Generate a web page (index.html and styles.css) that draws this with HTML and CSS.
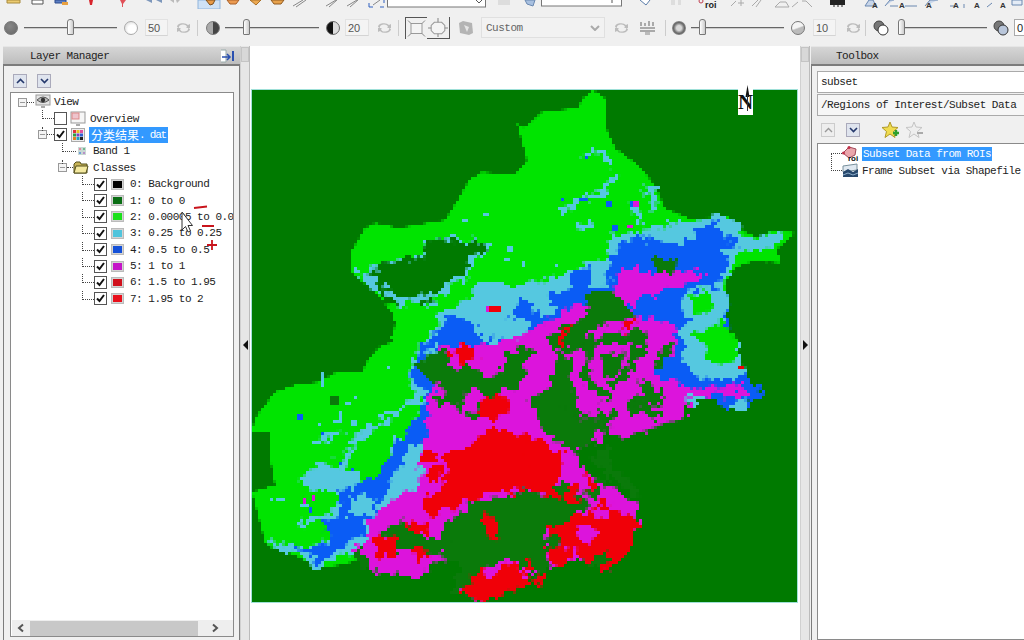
FILE: index.html
```html
<!DOCTYPE html>
<html lang="en">
  <head>
    <meta charset="UTF-8" />
    <title>ENVI Layer Manager</title>
    <link rel="stylesheet" href="styles.css">
  </head>
  <body>
    <!-- top toolbar is cut off by the window, only the bottom of the icons shows -->
    <svg class="icon-strip" width="1024" height="9" viewBox="0 0 1024 9">
      <rect x="198" y="0" width="22" height="9" fill="#cfe2f6" stroke="#8fb4dc"/>
      <path d="M7 0h13v3h-13z" fill="#eccb70" stroke="#a88a3c"/>
      <path d="M32 0h11v4h-11z" fill="#fff" stroke="#555"/>
      <path d="M55 0h11v3h-11z" fill="#5c7fc4" stroke="#2c4a8c"/><path d="M62 2h6v3h-6z" fill="#e8a040"/>
      <path d="M89 0h4l-1 5h-2z" fill="#d8242c"/><path d="M120 0h6l-3 4v3h-1v-3z" fill="#e05058"/>
      <path d="M146 0l6 3v-3zM156 0l6 3v-3z" fill="#7d97bb"/><path d="M170 0h4v3zM176 0h4l-3 3z" fill="#bbb"/>
      <path d="M206 0l4 5 3-1 2-4z" fill="#e89a48" stroke="#7a5020"/>
      <path d="M227 0h12l-3 4h-6z" fill="#ec9a50" stroke="#a8602a"/>
      <path d="M250 0h11l-5 5z" fill="#eca850" stroke="#a8702a"/>
      <path d="M271 0h13l-3 4h-7z" fill="#e8a24c" stroke="#905a20"/>
      <path d="M293 6l10-6M296 7l10-7" stroke="#888" fill="none"/>
      <path d="M326 6l10-6M329 7l8-7M347 6l10-6M350 7l8-7" stroke="#888" fill="none"/>
      <path d="M369 7h4M380 7h4M369 3v4M384 0v3" stroke="#3060c0" fill="none"/><path d="M373 5l7-5" stroke="#888"/>
      <rect x="387.500" y="-3" width="98" height="10" fill="#fff" stroke="#777"/>
      <path d="M476 0l3 3 3-3" stroke="#555" fill="none"/>
      <path d="M498 0h12v5h-12z" fill="#ddd"/>
      <path d="M525 0h10l-2 6-6-2z" fill="#a8c0e0" stroke="#6a88b0"/>
      <rect x="541.500" y="-3" width="80" height="9" fill="#fff" stroke="#777"/>
      <path d="M612 0v3" stroke="#555"/>
      <path d="M640 0l6 5 4-5" fill="#fff" stroke="#5a7ca8"/>
      <path d="M671 0v5h4v-5zM678 0v5h3v-5z" fill="#ddd"/>
      <circle cx="701" cy="1" r="2" fill="none" stroke="#c04050"/>
      <text class="strip-roi" x="705" y="8">roi</text>
      <path d="M731 6l5-5M738 3h6M741 0v6M752 6l6-6M756 7l5-7" stroke="#aaa" fill="none"/>
      <path d="M775 7h14l-3-5h-6zM798 2l-6 5M802 1h4l6 6" stroke="#aaa" fill="none"/>
      <path d="M830 0h15v5h-15z" fill="#222"/><path d="M834 5v2M838 5v2M842 5v2" stroke="#222"/>
      <path d="M865 6l4-6h4l3 6zM885 6l5-6h4M890 6h8M905 6h12M925 6l5-6h8M950 6h6" stroke="#6a88b0" fill="#c8d6ea"/>
      <text class="strip-a" x="872" y="8">A</text><text class="strip-a" x="899" y="8">A</text><text class="strip-a" x="926" y="8">A</text><text class="strip-a" x="953" y="8">A</text><text class="strip-a" x="974" y="8">A</text><text class="strip-a" x="1000" y="8">A</text>
      <path d="M964 4v4M987 7l5-4M1012 0h10v5h-10z" stroke="#6a88b0" fill="#e4ecf6"/>
    </svg>

    <div class="slider-bar">
      <i class="ball ball--dark"></i>
      <div class="slider slider--a"><i class="thumb"></i></div>
      <i class="ball ball--white"></i>
      <span class="num">50</span>
      <svg class="refresh" viewBox="0 0 15 12"><path d="M1 5a6 4 0 0 1 11-2l2-1v4h-4l1-1a4 3 0 0 0-8 1zM14 7a6 4 0 0 1-11 2l-2 1v-4h4l-1 1a4 3 0 0 0 8-1z"/></svg>
      <i class="sep"></i>
      <i class="ball ball--half"></i>
      <div class="slider slider--b"><i class="thumb"></i></div>
      <i class="ball ball--halfb"></i>
      <span class="num num--b">20</span>
      <svg class="refresh" viewBox="0 0 15 12"><path d="M1 5a6 4 0 0 1 11-2l2-1v4h-4l1-1a4 3 0 0 0-8 1zM14 7a6 4 0 0 1-11 2l-2 1v-4h4l-1 1a4 3 0 0 0 8-1z"/></svg>
      <i class="sep"></i>
      <div class="frame-btns">
        <svg class="frame-btn frame-btn--a" width="22" height="22" viewBox="0 0 21 20"><rect x="5" y="5" width="11" height="10" fill="#f4f4f4" stroke="#9a9a9a"/><path d="M2 2l3 3M19 2l-3 3M2 18l3-3M19 18l-3-3" stroke="#888"/></svg>
        <svg class="frame-btn frame-btn--b" width="23" height="22" viewBox="0 0 21 20"><path d="M7 5h7l3 3v5l-3 3h-7l-3-3v-5z" fill="#f4f4f4" stroke="#9a9a9a"/><path d="M10.500 1v4M10.500 16v3M1 10.500h3M17 10.500h3" stroke="#888"/></svg>
      </div>
      <svg class="gray-ic" width="16" height="16" viewBox="0 0 16 16"><path d="M1 3l4-2 9 2 1 10-4 2-9-2z" fill="#b4b4b4"/><path d="M6 5l5 2-2 5z" fill="#e6e6e6"/></svg>
      <div class="combo">Custom<svg width="10" height="6" viewBox="0 0 10 6"><path d="M1 1l4 4 4-4" fill="none" stroke="#aaa" stroke-width="2"/></svg></div>
      <svg class="refresh refresh--c" viewBox="0 0 15 12"><path d="M1 5a6 4 0 0 1 11-2l2-1v4h-4l1-1a4 3 0 0 0-8 1zM14 7a6 4 0 0 1-11 2l-2 1v-4h4l-1 1a4 3 0 0 0 8-1z"/></svg>
      <svg class="gray-ic gray-ic--b" width="17" height="16" viewBox="0 0 17 16"><path d="M1 8h15M1 11h15" stroke="#aaa" stroke-width="2"/><path d="M2 2v4M6 3v3M10 1v5M14 2v4" stroke="#aaa" stroke-width="2"/><path d="M6 12h5v3h-5z" fill="#bbb"/></svg>
      <i class="sep sep--c"></i>
      <i class="ball ball--ring"></i>
      <div class="slider slider--c"><i class="thumb"></i></div>
      <i class="ball ball--oval"></i>
      <span class="num num--c">10</span>
      <svg class="refresh refresh--d" viewBox="0 0 15 12"><path d="M1 5a6 4 0 0 1 11-2l2-1v4h-4l1-1a4 3 0 0 0-8 1zM14 7a6 4 0 0 1-11 2l-2 1v-4h4l-1 1a4 3 0 0 0 8-1z"/></svg>
      <i class="sep sep--d"></i>
      <svg class="overlap" width="16" height="16" viewBox="0 0 16 16"><circle cx="6" cy="6" r="5" fill="#777" stroke="#444"/><circle cx="10" cy="10" r="5" fill="#fff" stroke="#333"/></svg>
      <div class="slider slider--d"><i class="thumb thumb--start"></i></div>
      <svg class="overlap overlap--b" width="16" height="16" viewBox="0 0 16 16"><circle cx="6" cy="6" r="5" fill="#777" stroke="#444"/><circle cx="10" cy="10" r="5" fill="#b9c6da" stroke="#333"/></svg>
      <span class="num num--d">0</span>
    </div>

    <div class="workspace">
      <section class="panel panel--left">
        <header class="panel__title">
          <span>Layer Manager</span>
          <svg width="16" height="14" viewBox="0 0 16 14"><path d="M2 1h5v12h-5" fill="#fff" stroke="#9aa"/><path d="M3 8h7M8 5l3 3-3 3" fill="none" stroke="#2a50b0" stroke-width="1.500"/><path d="M14 2v10" stroke="#2a50b0" stroke-width="2"/></svg>
        </header>
        <div class="panel__body">
          <div class="move-btns">
            <button class="move-btn"><svg width="9" height="6" viewBox="0 0 9 6"><path d="M1 5l3.500-3.500 3.500 3.500" fill="none" stroke="#24386c" stroke-width="1.600"/></svg></button>
            <button class="move-btn"><svg width="9" height="6" viewBox="0 0 9 6"><path d="M1 1l3.500 3.500 3.500-3.500" fill="none" stroke="#24386c" stroke-width="1.600"/></svg></button>
          </div>
          <div class="tree-box">
            <ul class="tree">
              <li class="row row--view">
                <i class="exp"></i><i class="dash"></i>
                <svg class="ic ic--view" width="16" height="16" viewBox="0 0 16 16"><rect x="1" y="1" width="14" height="10" fill="#e4e4e4" stroke="#999"/><path d="M2 6q6-6 12 0q-6 5-12 0" fill="#bbb" stroke="#555"/><circle cx="8" cy="6" r="2.200" fill="#333"/><path d="M6 12h4v2h-4z" fill="#aaa"/></svg>
                <span>View</span>
              </li>
              <li class="row row--layer">
                <i class="elbow elbow--a"></i><i class="check"></i>
                <svg class="ic ic--over" width="16" height="16" viewBox="0 0 16 16"><rect x="1" y="1" width="14" height="11" fill="#f6f6f6" stroke="#999"/><rect x="2" y="2" width="7" height="6" fill="#eec4cc" stroke="#d88"/><path d="M6 13h4v2h-4z" fill="#aaa"/></svg>
                <span>Overview</span>
              </li>
              <li class="row row--file">
                <i class="exp"></i><i class="dash"></i><i class="check check--on"></i>
                <svg class="ic ic--pal" width="14" height="14" viewBox="0 0 14 14"><rect x=".5" y=".5" width="13" height="13" fill="#eee" stroke="#aaa"/><path d="M2 2h3v3h-3z" fill="#e03040"/><path d="M5.500 2h3v3h-3z" fill="#e8c020"/><path d="M9 2h3v3h-3z" fill="#e050a0"/><path d="M2 5.500h3v3h-3z" fill="#30a040"/><path d="M5.500 5.500h3v3h-3z" fill="#8040c0"/><path d="M9 5.500h3v3h-3z" fill="#3060d0"/><path d="M2 9h3v3h-3z" fill="#e08020"/><path d="M5.500 9h3v3h-3z" fill="#20a0c0"/><path d="M9 9h3v3h-3z" fill="#222"/></svg>
                <span class="sel sel--file"><b class="cjk">分类结果</b>. dat</span>
              </li>
              <li class="row row--band">
                <i class="elbow elbow--b"></i>
                <svg class="ic ic--band" width="8" height="8" viewBox="0 0 8 8"><rect width="8" height="8" fill="#c9d8d4"/><path d="M1 1h2v2h-2z" fill="#e08aa0"/><path d="M5 1h2v2h-2z" fill="#70b890"/><path d="M1 5h2v2h-2z" fill="#70a0d8"/><path d="M5 5h2v2h-2z" fill="#b890c8"/></svg>
                <span>Band 1</span>
              </li>
              <li class="row row--classes">
                <i class="exp"></i><i class="dash"></i>
                <svg class="ic ic--folder" width="16" height="13" viewBox="0 0 16 13"><path d="M1 3l2-2h4l1 2h6v9h-13z" fill="#c8b458" stroke="#55501c"/><path d="M3 5h12l-2 7h-12z" fill="#f4e9a0" stroke="#55501c"/></svg>
                <span>Classes</span>
              </li>
              <li class="row row--cls"><i class="elbow elbow--c"></i><i class="check check--on"></i><i class="swatch swatch--0"></i><span>0: Background</span></li>
              <li class="row row--cls"><i class="elbow elbow--c"></i><i class="check check--on"></i><i class="swatch swatch--1"></i><span>1: 0 to 0</span></li>
              <li class="row row--cls"><i class="elbow elbow--c"></i><i class="check check--on"></i><i class="swatch swatch--2"></i><span>2: 0.00005 to 0.05</span></li>
              <li class="row row--cls"><i class="elbow elbow--c"></i><i class="check check--on"></i><i class="swatch swatch--3"></i><span>3: 0.25 to 0.25</span></li>
              <li class="row row--cls"><i class="elbow elbow--c"></i><i class="check check--on"></i><i class="swatch swatch--4"></i><span>4: 0.5 to 0.5</span></li>
              <li class="row row--cls"><i class="elbow elbow--c"></i><i class="check check--on"></i><i class="swatch swatch--5"></i><span>5: 1 to 1</span></li>
              <li class="row row--cls"><i class="elbow elbow--c"></i><i class="check check--on"></i><i class="swatch swatch--6"></i><span>6: 1.5 to 1.95</span></li>
              <li class="row row--cls"><i class="elbow elbow--c"></i><i class="check check--on"></i><i class="swatch swatch--7"></i><span>7: 1.95 to 2</span></li>
            </ul>
            <!-- pen marks and the mouse pointer, both lie over the tree -->
            <svg class="marks" width="60" height="50" viewBox="0 0 60 50">
              <path d="M13 3l13-1.500M21 21h12M26 40h10M31 35v10" fill="none" stroke="#c8141c" stroke-width="1.800"/>
              <path d="M1 7v18l3.500-3.500 2.500 5.500 2.500-1-2.500-5.500h4.500z" fill="#fff" stroke="#333"/>
            </svg>
            <div class="hscroll">
              <svg width="8" height="10" viewBox="0 0 8 10"><path d="M6 1.500l-4 3.500 4 3.500" fill="none" stroke="#555" stroke-width="2"/></svg>
              <i class="hscroll__thumb"></i>
              <svg width="8" height="10" viewBox="0 0 8 10"><path d="M2 1.500l4 3.500-4 3.500" fill="none" stroke="#555" stroke-width="2"/></svg>
            </div>
          </div>
        </div>
      </section>

      <div class="splitter splitter--left"><i class="splitter__grip"></i><i class="arrow arrow--left"></i></div>

      <main class="canvas">
        <div class="map-wrap">
          <svg class="map" width="545" height="512" viewBox="252 90 545 512">
            <defs>
              <!-- 3px raster cells, like the classified image -->
              <filter id="cells" filterUnits="userSpaceOnUse" x="252" y="90" width="545" height="512" color-interpolation-filters="sRGB">
                <feFlood x="253" y="91" width="1" height="1" flood-color="#000" result="dot"/>
                <feComposite in="dot" in2="dot" x="252" y="90" width="3" height="3"/>
                <feTile result="grid"/>
                <feComposite in="SourceGraphic" in2="grid" operator="in"/>
                <feMorphology operator="dilate" radius="1"/>
              </filter>
              <!-- same cells, but borders are shaken first so classes fray into each other -->
              <filter id="rough" filterUnits="userSpaceOnUse" x="252" y="90" width="545" height="512" color-interpolation-filters="sRGB">
                <feTurbulence type="fractalNoise" baseFrequency=".1" numOctaves="3" seed="7" result="noise"/>
                <feDisplacementMap in="SourceGraphic" in2="noise" scale="18" xChannelSelector="R" yChannelSelector="G" result="shaken"/>
                <feFlood x="253" y="91" width="1" height="1" flood-color="#000" result="dot"/>
                <feComposite in="dot" in2="dot" x="252" y="90" width="3" height="3"/>
                <feTile result="grid"/>
                <feComposite in="shaken" in2="grid" operator="in"/>
                <feMorphology operator="dilate" radius="1"/>
              </filter>
            </defs>
            <rect class="dk" x="252" y="90" width="545" height="512"/>
            <g filter="url(#cells)">
              <!-- green land -->
              <path class="gr" d="M593 90 605 98 605 125 615 148 638 165 655 185 665 208 688 218 705 218 728 217 745 232 758 238 772 230 795 233 778 248 778 263 758 260 738 265 725 282 728 302 725 318 733 342 738 358 748 375 700 395 600 420 440 540 340 565 319 568 295 555 272 548 265 542 252 492 275 485 269 452 270 432 252 432 255 418 275 392 295 385 319 382 335 373 362 372 369 358 379 347 392 342 396 318 390 310 375 292 358 278 352 272 351 252 365 228 375 223 399 228 445 220 459 198 469 180 482 172 515 175 527 160 517 123 525 128 542 112 578 108 583 98z"/>
            </g>
            <g filter="url(#rough)">
              <!-- cyan fringe and dark bay in the north west -->
              <path class="cy" d="M356 272 379 266 399 258 422 256 425 244 442 236 462 240 488 243 488 254 472 260 468 278 455 282 448 292 436 298 440 308 415 300 405 305 399 310 375 292 360 280z"/>
              <path class="dk" d="M379 268 399 259 422 258 427 243 442 237 459 242 482 243 485 252 469 256 465 275 452 278 445 288 432 295 435 303 415 296 405 298 398 297 384 284 370 272z"/>
              <path class="dk" d="M396 306 384 286 372 282 384 300z"/>
              <!-- cyan band -->
              <path class="cy" d="M612 233 642 232 668 228 692 222 718 217 728 217 745 232 758 240 772 232 785 238 762 250 735 255 735 265 725 282 728 300 722 318 730 345 745 380 650 420 500 470 400 530 332 560 319 568 295 555 272 548 269 537 289 545 312 548 332 538 322 522 338 512 335 492 312 490 298 482 322 462 345 470 372 482 385 472 395 445 408 428 422 405 409 378 419 345 438 318 455 305 469 298 478 285 505 285 527 282 552 278 575 267 608 258 610 235z"/>
              <path class="gr" d="M738 258 758 250 785 238 795 233 778 248 778 263 758 260 738 265z"/>
              <path class="gr" d="M395 342 396 315 420 310 438 318 430 335 420 345z"/>
              <path class="cy-line" d="M560 212 580 200 600 192 618 175M583 158 590 153 605 155 610 168M640 190 655 190 655 215M634 200 640 225M575 230 592 222M680 222 645 228M290 525 312 520 340 510M298 480 330 464M340 475 355 440 400 410 420 395M420 430 396 440 388 470M360 430 372 425M320 440 340 430"/>
              <!-- blue -->
              <path class="bl" d="M608 262 622 245 642 235 668 245 690 240 700 228 718 222 725 235 740 245 722 248 728 258 715 295 728 300 730 345 745 375 758 385 762 395 748 405 725 408 698 392 640 392 520 400 480 430 466 445 410 445 382 498 372 515 362 532 352 542 319 562 285 543 312 550 332 540 322 524 340 514 336 492 352 488 382 470 395 445 410 425 425 405 425 388 410 378 422 345 427 342 442 325 455 315 472 325 485 342 505 320 525 295 545 292 568 292 572 272 590 268 590 290 608 285z"/>
              <!-- cyan islands on the blue -->
              <path class="cy" d="M688 288 722 288 728 302 725 335 738 345 745 375 725 378 700 380 682 362 684 345 678 330 692 322 680 310z"/>
              <path class="gr" d="M690 295 708 290 714 305 705 315 692 312z"/>
              <path class="gr" d="M692 335 722 318 735 342 738 358 722 368 706 362 708 345z"/>
              <path class="cy" d="M525 282 545 285 555 310 545 318 525 300zM590 266 607 260 610 280 600 288 590 288zM492 320 527 316 527 345 505 338 492 340z"/>
              <path class="cy" d="M430 345 436 345 440 365 425 375zM434 415 448 430 440 445 430 440zM350 495 378 500 370 515 350 515z"/>
              <path class="cy" d="M736 398 748 403 745 410 730 410z"/>
              <!-- magenta belt -->
              <path class="mg" d="M622 268 650 272 702 270 700 282 672 288 660 295 640 295 625 312 672 325 680 345 650 372 688 388 745 385 745 397 690 395 685 417 658 423 642 433 608 437 590 445 570 455 595 477 635 505 640 525 625 558 605 572 585 558 552 567 527 580 495 598 480 600 458 593 475 570 440 560 419 577 377 572 360 565 352 548 365 542 372 515 419 485 425 432 428 395 438 390 430 368 438 348 458 345 520 338 545 322 592 298 612 292z"/>
              <!-- dark holes -->
              <path class="dg" d="M416 366 430 356 440 350 450 352 445 365 460 372 465 360 485 378 520 362 527 368 527 378 505 392 490 400 480 388 465 392 462 412 445 402 440 382 425 380z"/>
              <path class="dg" d="M583 292 605 292 625 300 632 318 600 325 580 340 640 330 650 345 600 345 565 352 545 342 565 325 590 318z"/>
              <path class="dg" d="M652 258 665 258 680 265 672 272 655 272z"/>
              <path class="dg" d="M525 398 545 395 560 350 575 360 570 375 580 420 600 430 590 445 570 450 558 440 545 432 530 400z"/>
              <path class="dg" d="M598 410 625 415 630 400 642 395 650 405 628 412 600 425z"/>
              <path class="dg" d="M640 378 660 390 665 408 645 400zM600 355 625 350 620 372 605 380zM500 360 520 345 535 350 520 368z"/>
              <path class="dg" d="M487 500 527 490 540 498 565 480 585 498 590 505 570 520 545 530 547 575 520 570 508 560 478 572 470 590 450 592 462 570 445 560 442 530 450 520 470 505z"/>
              <path class="dg" d="M380 530 400 520 425 525 420 535 450 540 440 555 410 550 385 550z"/>
              <path class="dg" d="M354 550 362 548 372 570 358 565zM440 395 450 392 440 408 430 400zM595 450 610 445 615 470 600 470z"/>
              <path class="dg-line" d="M590 340 585 380 610 400M640 345 625 375 612 385M565 405 610 432M632 408 660 415M668 345 655 370M470 415 500 400M590 455 640 495M610 470 590 495"/>
              <!-- red -->
              <path class="rd" d="M442 458 465 445 492 428 527 437 540 438 565 460 556 480 540 490 527 490 497 492 470 502 425 515 425 495 442 490 448 470z"/>
              <path class="rd" d="M547 528 590 510 600 498 635 520 640 522 628 556 605 572 585 558 565 545 547 545z"/>
              <path class="rd" d="M459 593 475 575 480 568 490 578 509 563 519 572 527 575 527 585 495 598 482 600z"/>
              <path class="rd" d="M374 540 388 532 398 540 392 556 378 560zM404 520 432 524 428 532 408 532zM412 548 425 545 432 556 416 560z"/>
              <path class="rd" d="M425 452 440 448 436 462 420 460zM428 470 442 465 438 482 428 480zM480 403 500 392 512 405 495 420 478 415z"/>
              <path class="rd" d="M448 350 470 345 478 358 458 362zM556 340 565 330 572 322 564 345zM620 325 634 318 638 325 625 330zM525 438 560 450 552 480 530 488zM532 470 552 475 560 500 530 492zM585 470 598 488 590 492zM575 485 582 500 565 505 566 490z"/>
              <path class="rd" d="M530 580 545 575 560 560 572 558 552 566 538 590zM482 512 492 515 500 540 487 535zM525 555 535 565 525 572zM547 545 575 550 560 570 550 560z"/>
              <path class="mg" d="M575 530 590 522 600 535 585 545zM590 510 615 502 625 510 600 518z"/>
              <path class="dg" d="M590 560 605 552 612 562 600 568zM545 538 558 532 562 545 550 550z"/>
            </g>
            <!-- odd single cells -->
            <g filter="url(#cells)">
              <path class="gr" d="M482 200h6v2h-6zM553 190h4v4h-4zM574 232h5v4h-5zM500 248h7v5h-7zM380 420h4v4h-4z"/>
              <path class="cy" d="M484 212h4v4h-4zM462 219h6v3h-6zM508 246h5v5h-5zM504 258h7v3h-7zM522 262h4v4h-4zM554 265h3v3h-3zM333 420h10v3h-10zM318 424h3v3h-3zM312 442h8v2h-8zM278 449h7v2h-7zM340 412h3v8h-3zM352 421h4v4h-4zM270 498h4v3h-4zM276 499h9v3h-9zM300 505h8v3h-8zM386 365h3v3h-3zM345 403h6v3h-6zM388 418h3v3h-3zM355 395h3v3h-3zM320 373h5v14h-5zM333 395h6v4h-6z"/>
              <path class="dg" d="M330 397h8v7h-8z"/>
              <path class="bl" d="M297 414h5v5h-5zM320 432h3v3h-3zM340 462h3v3h-3zM308 508h4v5h-4zM352 468h3v3h-3zM585 155h4v4h-4zM628 245h4v4h-4zM630 201h6v6h-6zM612 225h6v6h-6zM580 197h8v5h-8zM605 200h8v6h-8zM560 198h4v4h-4z"/>
              <path class="mg" d="M486 305h14v8h-14zM311 496h4v6h-4zM302 497h4v6h-4zM634 200h5v6h-5zM628 225h4v4h-4z"/>
              <path class="rd" d="M490 306h10v5h-10zM739 365h4v4h-4z"/>
            </g>
          </svg>
          <div class="north"><span>N</span><svg class="north__arrow" width="7" height="26" viewBox="0 0 7 26"><path d="M3.500 0l2 12h-4z" fill="#111"/><path d="M3.500 10v16" stroke="#333"/></svg></div>
        </div>
      </main>

      <div class="splitter splitter--right"><i class="splitter__grip"></i><i class="arrow arrow--right"></i></div>

      <section class="panel panel--right">
        <header class="panel__title panel__title--tool"><span>Toolbox</span></header>
        <div class="panel__body panel__body--tool">
          <div class="field field--search">subset</div>
          <div class="field field--path">/Regions of Interest/Subset Data</div>
          <div class="move-btns move-btns--tool">
            <button class="move-btn move-btn--off"><svg width="9" height="6" viewBox="0 0 9 6"><path d="M1 5l3.500-3.500 3.500 3.500" fill="none" stroke="#999" stroke-width="1.400"/></svg></button>
            <button class="move-btn"><svg width="9" height="6" viewBox="0 0 9 6"><path d="M1 1l3.500 3.500 3.500-3.500" fill="none" stroke="#24386c" stroke-width="1.600"/></svg></button>
            <svg class="star" width="18" height="18" viewBox="0 0 18 18"><path d="M8 1l2 5 6 .5-4.500 4 1.500 6-5-3.500-5 3.500 1.500-6-4.500-4 6-.5z" fill="#f0dc50" stroke="#b09a28"/><path d="M11 12h6M14 9v6" stroke="#2ea02e" stroke-width="2.400"/></svg>
            <svg class="star star--off" width="18" height="18" viewBox="0 0 18 18"><path d="M8 1l2 5 6 .5-4.500 4 1.500 6-5-3.500-5 3.500 1.500-6-4.500-4 6-.5z" fill="#eee" stroke="#c4c4c4"/><path d="M11 12h6" stroke="#aaa" stroke-width="2"/></svg>
          </div>
          <ul class="tool-tree">
            <li class="tool-row">
              <i class="tool-elbow tool-elbow--first"></i>
              <svg class="tool-ic" width="17" height="17" viewBox="0 0 17 17"><path d="M1 8l6-6 7 2-1 6-6 3z" fill="#eaa6ac" stroke="#a04858"/><circle cx="7" cy="2.500" r="1.500" fill="#c03048"/><circle cx="1.500" cy="8" r="1.500" fill="#c03048"/><text class="roi-text" x="6" y="16">roi</text></svg>
              <span class="sel sel--tool">Subset Data from ROIs</span>
            </li>
            <li class="tool-row">
              <i class="tool-elbow"></i>
              <svg class="tool-ic" width="17" height="15" viewBox="0 0 17 15"><path d="M1 3l14-2v6l-14 2z" fill="#dfe8f0" stroke="#78909c"/><path d="M1 9l5-3 5 3 5-3v8h-15z" fill="#28486c"/><path d="M1 12l5-2 5 2 5-2" stroke="#8fb0cc" fill="none"/></svg>
              <span>Frame Subset via Shapefile</span>
            </li>
          </ul>
        </div>
      </section>
    </div>
  </body>
</html>
```

FILE: styles.css
```css
* {
  margin: 0;
  padding: 0;
  box-sizing: border-box;
}
html,
body {
  width: 1024px;
  height: 640px;
  overflow: hidden;
}
body {
  font-family: "Liberation Mono", "Noto Sans CJK SC", monospace;
  font-size: 11px;
  letter-spacing: -0.5px;
  color: #222;
  background: #f0f0f0;
  display: flex;
  flex-direction: column;
}
ul {
  list-style: none;
}
i {
  display: block;
  flex: none;
}

/* Top strip */
.icon-strip {
  display: block;
  flex: none;
}
.strip-roi {
  font-family: "Liberation Sans", sans-serif;
  font-size: 9px;
  font-weight: 700;
  letter-spacing: 0;
  fill: #222;
}
.strip-a {
  font-family: "Liberation Sans", sans-serif;
  font-size: 8px;
  font-weight: 700;
  letter-spacing: 0;
  fill: #333;
}

/* Slider bar */
.slider-bar {
  flex: none;
  height: 37px;
  padding: 0 0 0 4px;
  display: flex;
  align-items: center;
  overflow: hidden;
}
.ball {
  width: 14px;
  height: 14px;
  border-radius: 50%;
}
.ball--dark {
  background: radial-gradient(circle at 40% 35%, #888, #666);
  border: 1px solid #777;
}
.ball--white {
  margin-left: 7px;
  background: radial-gradient(circle at 60% 60%, #fff 40%, #cfcfcf);
  border: 1px solid #aaa;
}
.ball--half {
  margin-left: 8px;
  background: linear-gradient(90deg, #aaa 50%, #444 50%);
  border: 1px solid #777;
}
.ball--halfb {
  margin-left: 7px;
  background: linear-gradient(90deg, #111 50%, #ddd 50%);
  border: 1px solid #666;
}
.ball--ring {
  margin-left: 6px;
  background: radial-gradient(circle, #d8d8d8 25%, #666 55%, #999 75%);
}
.ball--oval {
  margin-left: 7px;
  background: linear-gradient(160deg, #f4f4f4 45%, #bbb 55%);
  border: 1px solid #777;
}
.slider {
  flex: none;
  height: 1px;
  background: #666;
  margin-left: 6px;
  position: relative;
  box-shadow: 0 1px 0 #ccc;
}
.slider--a {
  width: 93px;
}
.slider--b {
  width: 94px;
  margin-left: 5px;
}
.slider--c {
  width: 93px;
  margin-left: 5px;
}
.slider--d {
  width: 89px;
  margin-left: 9px;
}
.thumb {
  position: absolute;
  top: -8px;
  width: 7px;
  height: 16px;
  background: linear-gradient(90deg, #fff, #ccc);
  border: 1px solid #777;
  border-radius: 3px 3px 1px 1px;
}
.slider--a .thumb {
  left: 43px;
}
.slider--b .thumb {
  left: 18px;
}
.slider--c .thumb {
  left: 8px;
}
.thumb--start {
  left: 0;
}
.num {
  flex: none;
  width: 23px;
  height: 17px;
  margin-left: 7px;
  padding: 2px 0 0 2px;
  background: #f4f4f4;
  border: 1px solid #e2e2e2;
  border-bottom-color: #d4d4d4;
  font-family: "Liberation Sans", sans-serif;
  letter-spacing: 0;
  font-size: 11px;
  color: #555;
}
.num--b {
  width: 24px;
  margin-left: 5px;
}
.num--c {
  margin-left: 8px;
}
.num--d {
  width: 11px;
  margin-left: 5px;
  background: #fff;
  border-color: #aaa;
  border-right: none;
  color: #222;
}
.refresh {
  flex: none;
  width: 15px;
  height: 12px;
  margin-left: 8px;
  fill: #bcbcbc;
}
.refresh--c {
  margin-left: 9px;
}
.refresh--d {
  margin-left: 10px;
}
.sep {
  width: 1px;
  height: 16px;
  background: #ccc;
  margin-left: 6px;
}
.sep--c {
  margin-left: 9px;
}
.sep--d {
  margin-left: 4px;
}
.frame-btns {
  flex: none;
  margin-left: 6px;
  display: flex;
  height: 22px;
  width: 45px;
}
.frame-btn {
  display: block;
  flex: none;
}
.frame-btn--a {
  border-top: 1px solid #555;
  border-left: 1px solid #555;
}
.frame-btn--b {
  border-bottom: 1px solid #555;
  border-right: 1px solid #555;
}
.gray-ic {
  flex: none;
  margin-left: 8px;
}
.gray-ic--b {
  margin-left: 10px;
}
.combo {
  flex: none;
  width: 124px;
  height: 21px;
  margin-left: 7px;
  padding: 0 4px;
  display: flex;
  align-items: center;
  justify-content: space-between;
  background: #f2f2f2;
  border: 1px solid #e0e0e0;
  color: #666;
}
.overlap {
  flex: none;
  margin-left: 7px;
}
.overlap--b {
  margin-left: 6px;
}

/* Workspace */
.workspace {
  flex: 1;
  min-height: 0;
  display: flex;
}
.panel {
  flex: none;
  display: flex;
  flex-direction: column;
}
.panel--left {
  width: 237px;
  margin-left: 3px;
}
.panel--right {
  flex: 1;
  min-width: 0;
  margin-left: 1px;
}
.panel__title {
  flex: none;
  height: 18px;
  padding: 0 5px 0 27px;
  display: flex;
  align-items: center;
  justify-content: space-between;
  background: linear-gradient(#d6d6d6, #bdbdbd);
  border-top: 1px solid #e6e6e6;
}
.panel__title--tool {
  padding-left: 25px;
}
.panel__body {
  flex: 1;
  min-height: 0;
  display: flex;
  flex-direction: column;
  padding: 7px 5px 3px 6px;
  border: 1px solid #7c7c7c;
  border-bottom: none;
  border-top-width: 2px;
}
.panel__body--tool {
  padding: 5px 0 0 5px;
  border-right: none;
  overflow: hidden;
}
.move-btns {
  flex: none;
  display: flex;
  align-items: center;
  gap: 10px;
  height: 15px;
  margin: 0 0 4px 3px;
}
.move-btn {
  width: 14px;
  height: 14px;
  display: flex;
  align-items: center;
  justify-content: center;
  background: #dfe4ee;
  border: 1px solid #aab;
}
.move-btn--off {
  background: #eee;
  border-color: #ccc;
}

/* Layer tree */
.tree-box {
  flex: 1;
  min-height: 0;
  position: relative;
  display: flex;
  flex-direction: column;
  background: #fff;
  border: 1px solid #8a8a8a;
  overflow: hidden;
}
.tree {
  flex: 1;
  min-height: 0;
  padding-top: 1px;
}
.row {
  height: 16.4px;
  display: flex;
  align-items: center;
  white-space: nowrap;
  overflow: hidden;
  position: relative;
}
.row--view {
  padding-left: 7px;
}
.row--layer,
.row--file {
  padding-left: 27px;
}
.row--band,
.row--classes {
  padding-left: 47px;
}
.row--cls {
  padding-left: 67px;
}
/* dotted stubs that join a parent row to the expander below it */
.row--file::before,
.row--classes::before {
  content: "";
  position: absolute;
  top: 0;
  height: 4px;
  border-left: 1px dotted #444;
}
.row--file::before {
  left: 31px;
}
.row--classes::before {
  left: 51px;
}
.exp {
  width: 9px;
  height: 9px;
  border: 1px solid #999;
  background: linear-gradient(#999, #999) center / 5px 1px no-repeat #f4f4f4;
}
.dash {
  width: 7px;
  border-top: 1px dotted #444;
}
.row--classes .dash {
  width: 6px;
}
.elbow {
  align-self: flex-start;
  height: 17px;
  margin-top: -8px;
  margin-left: 4px;
  border-left: 1px dotted #444;
  border-bottom: 1px dotted #444;
}
.elbow--a,
.elbow--c {
  width: 12px;
}
.elbow--b {
  width: 14px;
}
.ic {
  flex: none;
}
.ic--view {
  margin-left: 1px;
  margin-right: 3px;
}
.ic--over {
  margin: 0 4px 0 3px;
}
.ic--pal {
  margin: 0 4px 0 4px;
}
.ic--band {
  margin: 0 7px 0 2px;
}
.ic--folder {
  margin: 0 4px 0 0;
}
.check {
  flex: none;
  width: 13px;
  height: 13px;
  border: 1px solid #555;
  background: #fff;
}
.check--on {
  background: url("data:image/svg+xml,%3Csvg xmlns='http://www.w3.org/2000/svg' viewBox='0 0 11 11'%3E%3Cpath d='M2 5.500l2.500 2.500 4.500-6' fill='none' stroke='%23111' stroke-width='2'/%3E%3C/svg%3E") center no-repeat #fff;
}
.swatch {
  width: 13px;
  height: 11px;
  margin: 0 6px 0 4px;
  border: 2px solid #d4d4d4;
  outline: 1px solid #bbb;
  outline-offset: -1px;
}
.swatch--0 {
  background: #000;
}
.swatch--1 {
  background: #0a6e14;
}
.swatch--2 {
  background: #1ce01c;
}
.swatch--3 {
  background: #50c4dc;
}
.swatch--4 {
  background: #1450d8;
}
.swatch--5 {
  background: #c414c8;
}
.swatch--6 {
  background: #d0101c;
}
.swatch--7 {
  background: #e8101c;
}
.sel {
  padding: 1px 2px;
  background: #3399ff;
  color: #fff;
}
.sel--file {
  display: flex;
  align-items: center;
  height: 16px;
  padding: 0 2px;
  letter-spacing: -1.2px;
}
.cjk {
  font-family: "Noto Sans CJK SC", sans-serif;
  font-weight: 400;
  font-size: 12px;
  line-height: 14px;
  letter-spacing: 0;
}
.marks {
  position: absolute;
  left: 170px;
  top: 112px;
  pointer-events: none;
}
.hscroll {
  flex: none;
  height: 16px;
  display: flex;
  align-items: center;
  padding: 0 5px;
  background: #eee;
  margin: 0 0 0 1px;
}
.hscroll__thumb {
  width: 168px;
  height: 15px;
  margin: 0 13px 0 5px;
  background: #c8c8c8;
}

/* Splitters */
.splitter {
  flex: none;
  width: 10px;
  display: flex;
  flex-direction: column;
  align-items: center;
  background: #e6e6e6;
  border-left: 1px solid #d0d0d0;
  border-right: 1px solid #bbb;
}
.splitter__grip {
  width: 8px;
  height: 15px;
  background: #d8d8d8;
  border: 1px solid #c4c4c4;
  margin-top: 1px;
}
.arrow {
  margin-top: 278px;
  width: 0;
  height: 0;
  border-top: 5px solid transparent;
  border-bottom: 5px solid transparent;
}
.arrow--left {
  border-right: 5px solid #111;
}
.arrow--right {
  border-left: 5px solid #111;
}

/* Map */
.canvas {
  flex: none;
  width: 550px;
  background: #fff;
  padding: 44px 0 0 2px;
}
.map-wrap {
  position: relative;
  width: 545px;
  height: 512px;
}
.map {
  display: block;
  outline: 1px solid #9fe0d8;
}
.dk {
  fill: #007a00;
}
.dg {
  fill: #0a7a0a;
}
.gr {
  fill: #00e400;
}
.cy {
  fill: #55c8e0;
}
.bl {
  fill: #0a5cf5;
}
.mg {
  fill: #dc14dc;
}
.rd {
  fill: #f00008;
}
.cy-line {
  fill: none;
  stroke: #55c8e0;
  stroke-width: 5;
}
.dg-line {
  fill: none;
  stroke: #0a7a0a;
  stroke-width: 8;
}
.north {
  position: absolute;
  left: 486px;
  top: -5px;
  width: 15px;
  height: 30px;
  background: #fff;
  padding-top: 7px;
  text-align: center;
}
.north span {
  display: block;
  color: #111;
  font-family: "Liberation Serif", serif;
  font-weight: 700;
  font-size: 21px;
  line-height: 20px;
  letter-spacing: 0;
}
.north__arrow {
  position: absolute;
  left: 6px;
  top: 0;
}

/* Toolbox */
.field {
  flex: none;
  height: 22px;
  width: 230px;
  padding: 0 3px;
  display: flex;
  align-items: center;
  white-space: nowrap;
  border: 1px solid #aaa;
}
.field--search {
  background: #fff;
  margin-bottom: 1px;
}
.field--path {
  background: #f6f6f6;
}
.move-btns--tool {
  margin: 5px 0 4px 4px;
  height: 18px;
  gap: 11px;
}
.star {
  flex: none;
  margin-left: 11px;
}
.star--off {
  margin-left: -5px;
}
.tool-tree {
  flex: 1;
  width: 230px;
  padding: 1px 0 0 13px;
  background: #fff;
  border: 1px solid #8a8a8a;
}
.tool-row {
  height: 17px;
  display: flex;
  align-items: center;
  white-space: nowrap;
}
.tool-elbow {
  align-self: flex-start;
  width: 11px;
  height: 17px;
  margin-top: -8px;
  border-left: 1px dotted #444;
  border-bottom: 1px dotted #444;
}
.tool-elbow--first {
  margin-top: 8px;
  height: 18px;
  border-bottom: none;
  border-top: 1px dotted #444;
}
.tool-ic {
  flex: none;
  margin-right: 3px;
}
.roi-text {
  font-family: "Liberation Sans", sans-serif;
  font-size: 8px;
  font-weight: 700;
  letter-spacing: 0;
  fill: #111;
}
.sel--tool {
  padding: 1px 1px;
}
```
